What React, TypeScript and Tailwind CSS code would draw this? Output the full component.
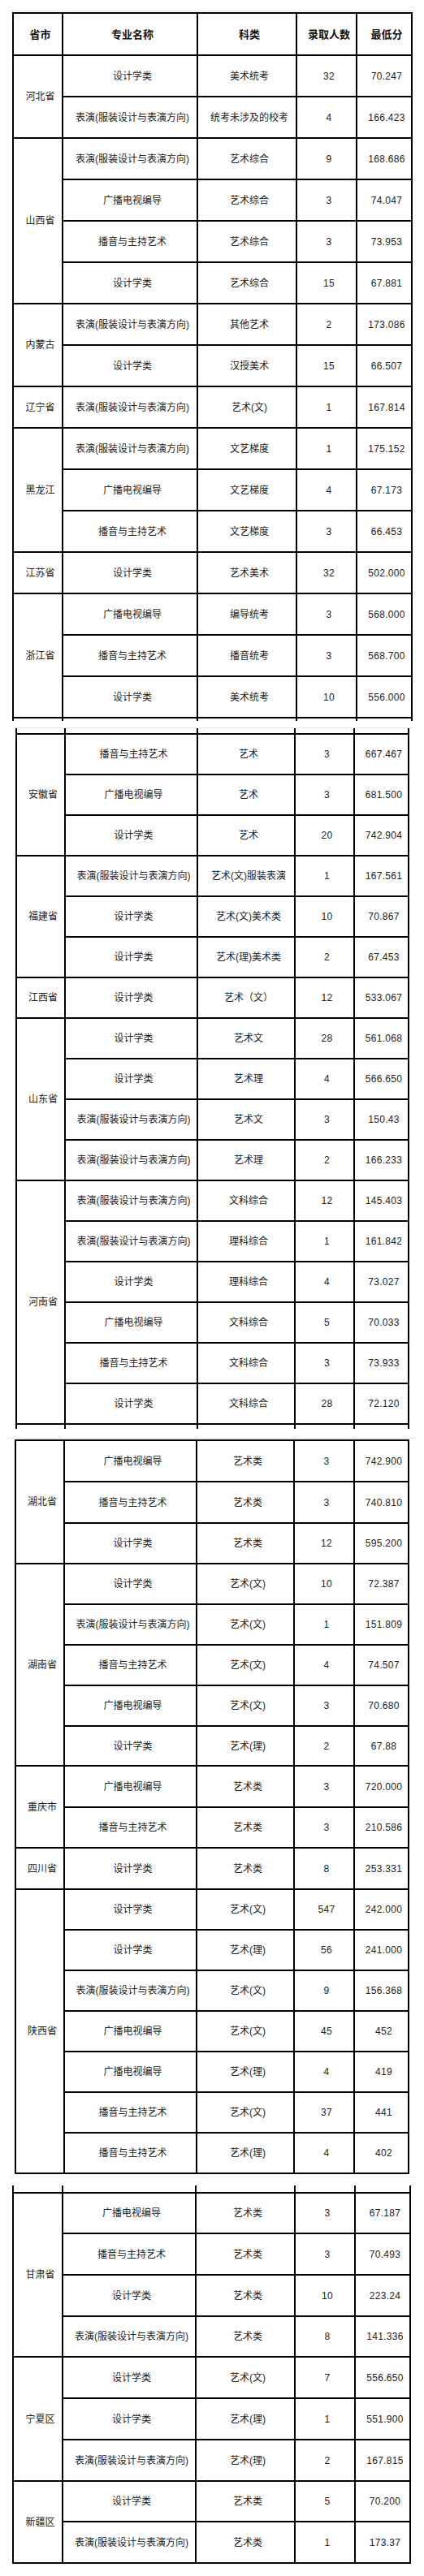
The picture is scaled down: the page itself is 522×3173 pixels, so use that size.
import { clsx } from 'clsx';

type Row = [string, string, string, string];
type Group = { province: string; rows: Row[] };

type SectionProps = {
  wrap: string;
  cols: string[];
  heights: string[];
  groups: Group[];
  header?: boolean;
  tailTop?: string;
  tailBottom?: string;
};

const PERF = '表演(服装设计与表演方向)';
const BCAST = '播音与主持艺术';
const TV = '广播电视编导';
const DESIGN = '设计学类';

const rows51 = Array(16).fill('h-[51px]');
const rows50 = Array(16).fill('h-[50px]');

const section1: SectionProps = {
  wrap: 'ml-[15px] w-[493px] mt-[1px]',
  cols: ['w-[63px]', 'w-[166px]', 'w-[122px]', 'w-[74px]', 'w-[68px]'],
  heights: ['h-[54px]', ...rows51],
  header: true,
  tailBottom: 'h-[3px]',
  groups: [
    {
      province: '河北省',
      rows: [
        [DESIGN, '美术统考', '32', '70.247'],
        [PERF, '统考未涉及的校考', '4', '166.423'],
      ],
    },
    {
      province: '山西省',
      rows: [
        [PERF, '艺术综合', '9', '168.686'],
        [TV, '艺术综合', '3', '74.047'],
        [BCAST, '艺术综合', '3', '73.953'],
        [DESIGN, '艺术综合', '15', '67.881'],
      ],
    },
    {
      province: '内蒙古',
      rows: [
        [PERF, '其他艺术', '2', '173.086'],
        [DESIGN, '汉授美术', '15', '66.507'],
      ],
    },
    { province: '辽宁省', rows: [[PERF, '艺术(文)', '1', '167.814']] },
    {
      province: '黑龙江',
      rows: [
        [PERF, '文艺梯度', '1', '175.152'],
        [TV, '文艺梯度', '4', '67.173'],
        [BCAST, '文艺梯度', '3', '66.453'],
      ],
    },
    { province: '江苏省', rows: [[DESIGN, '艺术美术', '32', '502.000']] },
    {
      province: '浙江省',
      rows: [
        [TV, '编导统考', '3', '568.000'],
        [BCAST, '播音统考', '3', '568.700'],
        [DESIGN, '美术统考', '10', '556.000'],
      ],
    },
  ],
};

const section2: SectionProps = {
  wrap: 'ml-[19px] w-[485px]',
  cols: ['w-[62px]', 'w-[163px]', 'w-[120px]', 'w-[73px]', 'w-[67px]'],
  heights: ['h-[52px]', ...rows50],
  tailTop: 'h-[6px]',
  tailBottom: 'h-[5px]',
  groups: [
    {
      province: '安徽省',
      rows: [
        [BCAST, '艺术', '3', '667.467'],
        [TV, '艺术', '3', '681.500'],
        [DESIGN, '艺术', '20', '742.904'],
      ],
    },
    {
      province: '福建省',
      rows: [
        [PERF, '艺术(文)服装表演', '1', '167.561'],
        [DESIGN, '艺术(文)美术类', '10', '70.867'],
        [DESIGN, '艺术(理)美术类', '2', '67.453'],
      ],
    },
    { province: '江西省', rows: [[DESIGN, '艺术（文）', '12', '533.067']] },
    {
      province: '山东省',
      rows: [
        [DESIGN, '艺术文', '28', '561.068'],
        [DESIGN, '艺术理', '4', '566.650'],
        [PERF, '艺术文', '3', '150.43'],
        [PERF, '艺术理', '2', '166.233'],
      ],
    },
    {
      province: '河南省',
      rows: [
        [PERF, '文科综合', '12', '145.403'],
        [PERF, '理科综合', '1', '161.842'],
        [DESIGN, '理科综合', '4', '73.027'],
        [TV, '文科综合', '5', '70.033'],
        [BCAST, '文科综合', '3', '73.933'],
        [DESIGN, '文科综合', '28', '72.120'],
      ],
    },
  ],
};

const section3: SectionProps = {
  wrap: 'ml-[18px] w-[486px] mt-[1px]',
  cols: ['w-[62px]', 'w-[163px]', 'w-[120px]', 'w-[74px]', 'w-[67px]'],
  heights: [
    'h-[53px]', 'h-[51px]', 'h-[50px]', 'h-[50px]', 'h-[50px]', 'h-[50px]',
    'h-[50px]', 'h-[49px]', 'h-[51px]', 'h-[50px]', 'h-[51px]', 'h-[50px]',
    'h-[50px]', 'h-[50px]', 'h-[50px]', 'h-[50px]', 'h-[50px]', 'h-[50px]',
  ],
  groups: [
    {
      province: '湖北省',
      rows: [
        [TV, '艺术类', '3', '742.900'],
        [BCAST, '艺术类', '3', '740.810'],
        [DESIGN, '艺术类', '12', '595.200'],
      ],
    },
    {
      province: '湖南省',
      rows: [
        [DESIGN, '艺术(文)', '10', '72.387'],
        [PERF, '艺术(文)', '1', '151.809'],
        [BCAST, '艺术(文)', '4', '74.507'],
        [TV, '艺术(文)', '3', '70.680'],
        [DESIGN, '艺术(理)', '2', '67.88'],
      ],
    },
    {
      province: '重庆市',
      rows: [
        [TV, '艺术类', '3', '720.000'],
        [BCAST, '艺术类', '3', '210.586'],
      ],
    },
    { province: '四川省', rows: [[DESIGN, '艺术类', '8', '253.331']] },
    {
      province: '陕西省',
      rows: [
        [DESIGN, '艺术(文)', '547', '242.000'],
        [DESIGN, '艺术(理)', '56', '241.000'],
        [PERF, '艺术(文)', '9', '156.368'],
        [TV, '艺术(文)', '45', '452'],
        [TV, '艺术(理)', '4', '419'],
        [BCAST, '艺术(文)', '37', '441'],
        [BCAST, '艺术(理)', '4', '402'],
      ],
    },
  ],
};

const section4: SectionProps = {
  wrap: 'ml-[15px] w-[491px] mt-[10px]',
  cols: ['w-[63px]', 'w-[164px]', 'w-[122px]', 'w-[74px]', 'w-[68px]'],
  heights: [
    'h-[52px]', 'h-[51px]', 'h-[51px]', 'h-[50px]', 'h-[51px]',
    'h-[51px]', 'h-[51px]', 'h-[50px]', 'h-[51px]',
  ],
  tailTop: 'h-[8px]',
  groups: [
    {
      province: '甘肃省',
      rows: [
        [TV, '艺术类', '3', '67.187'],
        [BCAST, '艺术类', '3', '70.493'],
        [DESIGN, '艺术类', '10', '223.24'],
        [PERF, '艺术类', '8', '141.336'],
      ],
    },
    {
      province: '宁夏区',
      rows: [
        [DESIGN, '艺术(文)', '7', '556.650'],
        [DESIGN, '艺术(理)', '1', '551.900'],
        [PERF, '艺术(理)', '2', '167.815'],
      ],
    },
    {
      province: '新疆区',
      rows: [
        [DESIGN, '艺术类', '5', '70.200'],
        [PERF, '艺术类', '1', '173.37'],
      ],
    },
  ],
};

const cell = 'border-r-2 border-b-2 border-black text-center align-middle pl-[6px] pr-0 py-0';

function TailRow({ h, n }: { h: string; n: number }) {
  return (
    <tr className={h}>
      {Array.from({ length: n }).map((_, i) => (
        <td key={i} className={clsx('border-r-2 border-black p-0', i === 0 && 'border-l-2')} />
      ))}
    </tr>
  );
}

function Section({ wrap, cols, heights, groups, header, tailTop, tailBottom }: SectionProps) {
  let rowIndex = header ? 1 : 0;
  return (
    <table className={clsx('table-fixed border-separate border-spacing-0', wrap)}>
      <colgroup>
        {cols.map((c, i) => (
          <col key={i} className={c} />
        ))}
      </colgroup>
      <tbody>
        {tailTop && <TailRow h={tailTop} n={cols.length} />}
        {header && (
          <tr className={heights[0]}>
            {['省市', '专业名称', '科类', '录取人数', '最低分'].map((t, i) => (
              <th
                key={t}
                className={clsx(cell, 'border-t-2 text-[13px] font-bold text-[#111]', i === 0 && 'border-l-2')}
              >
                {t}
              </th>
            ))}
          </tr>
        )}
        {groups.map((g) =>
          g.rows.map((r, i) => {
            const idx = rowIndex++;
            const top = idx === 0;
            return (
              <tr key={g.province + i} className={heights[idx]}>
                {i === 0 && (
                  <td rowSpan={g.rows.length} className={clsx(cell, 'border-l-2', top && 'border-t-2')}>
                    {g.province}
                  </td>
                )}
                {r.map((v, j) => (
                  <td key={j} className={clsx(cell, top && 'border-t-2', j >= 2 && 'tracking-[0.3px]')}>
                    {v}
                  </td>
                ))}
              </tr>
            );
          })
        )}
        {tailBottom && <TailRow h={tailBottom} n={cols.length} />}
      </tbody>
    </table>
  );
}

export default function App() {
  return (
    <div className="w-[522px] h-[3173px] bg-white flex flex-col text-[12px] leading-none text-[#222] font-['Liberation_Sans','Noto_Sans_CJK_SC',sans-serif]">
      <div className="mt-[13px] ml-[13px] w-[497px] h-px bg-[#e4e4e4]" />
      <Section {...section1} />
      <div className="mt-[8px] ml-[15px] w-[495px] h-px bg-[#e4e4e4]" />
      <Section {...section2} />
      <div className="mt-[11px] ml-[8px] w-[504px] h-px bg-[#e4e4e4]" />
      <Section {...section3} />
      <div className="mt-[3px] ml-[12px] w-[498px] h-px bg-[#ececec]" />
      <Section {...section4} />
    </div>
  );
}
